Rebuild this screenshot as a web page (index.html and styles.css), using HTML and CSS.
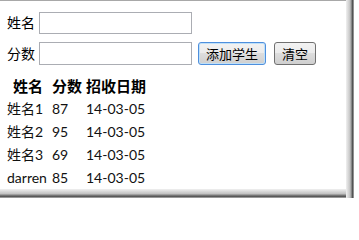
FILE: index.html
```html
<!DOCTYPE html>
<html lang="zh-CN">
<head>
<meta charset="utf-8">
<title>学生</title>
<link rel="stylesheet" href="styles.css">
</head>
<body>
<div class="shadow">
  <div class="page">
    <div class="row">
      <label class="label">姓名</label>
      <input class="field" type="text">
    </div>
    <div class="row row2">
      <label class="label">分数</label>
      <input class="field" type="text">
      <button class="btn btn-focus" type="button">添加学生</button>
      <button class="btn btn-clear" type="button">清空</button>
    </div>
    <table class="list">
      <thead>
        <tr><th class="c1">姓名</th><th class="c2">分数</th><th class="c3">招收日期</th></tr>
      </thead>
      <tbody>
        <tr><td class="c1">姓名1</td><td class="c2">87</td><td class="c3">14-03-05</td></tr>
        <tr><td class="c1">姓名2</td><td class="c2">95</td><td class="c3">14-03-05</td></tr>
        <tr><td class="c1">姓名3</td><td class="c2">69</td><td class="c3">14-03-05</td></tr>
        <tr><td class="c1">darren</td><td class="c2">85</td><td class="c3">14-03-05</td></tr>
      </tbody>
    </table>
  </div>
</div>
</body>
</html>
```
FILE: styles.css
```css
html, body {
  margin: 0;
  padding: 0;
  background: #fff;
}
body {
  font-family: "Lato", "Noto Sans CJK SC", sans-serif;
  font-size: 14px;
  color: #000;
  width: 359px;
  height: 202px;
  overflow: hidden;
}
.shadow {
  display: inline-block;
  padding: 0 8px 9px 0;
  background:
    linear-gradient(to right, #f0f0f0, #c4c4c4 50%, #8a8a8a 68%, #505050 80%, #6a6a6a 90%, #d0d0d0) right top / 8px 100% no-repeat,
    linear-gradient(to bottom, #f0f0f0, #c4c4c4 50%, #8a8a8a 68%, #505050 80%, #6a6a6a 90%, #d0d0d0) left bottom / 100% 9px no-repeat;
}
.page {
  width: 346px;
  height: 189px;
  box-sizing: border-box;
  border-top: 1px solid #a8a8a8;
  background: #fff;
  padding: 11px 0 0 7px;
  display: flex;
  flex-direction: column;
}
.row {
  display: flex;
  align-items: center;
  height: 22px;
}
.row2 {
  margin-top: 8px;
  height: 23px;
}
.label {
  width: 28px;
  margin-right: 4px;
  line-height: 20px;
  white-space: nowrap;
}
.field {
  width: 153px;
  height: 22px;
  box-sizing: border-box;
  border: 1px solid #abadb3;
  margin: 0;
  padding: 0 2px;
  font: inherit;
  background: #fff;
}
.row2 .field {
  height: 23px;
}
.btn {
  height: 23px;
  box-sizing: border-box;
  margin: 0;
  padding: 0;
  font-family: "Noto Sans CJK SC", sans-serif;
  font-size: 13px;
  line-height: 20px;
  color: #000;
  border: 1px solid #707070;
  border-radius: 3px;
  background: linear-gradient(to bottom, #f2f2f2 0%, #ebebeb 50%, #dddddd 50%, #cfcfcf 100%);
}
.btn-focus {
  width: 68px;
  margin-left: 6px;
  border-color: #4e8fdd;
  box-shadow: inset 0 0 0 1px #bfe0f8;
}
.btn-clear {
  width: 42px;
  margin-left: 8px;
}
.list {
  margin-top: 9px;
  border-collapse: collapse;
  border-spacing: 0;
  font-size: 14px;
}
.list th, .list td {
  padding: 0;
  height: 23px;
  line-height: 20px;
  text-align: left;
  white-space: nowrap;
}
.list th {
  font-size: 15px;
  font-weight: bold;
}
.list .c1 {
  width: 45px;
}
.list th.c1 {
  padding-left: 6px;
  width: 39px;
}
.list .c2 {
  width: 34px;
}
.list td {
  color: #111;
}
```
